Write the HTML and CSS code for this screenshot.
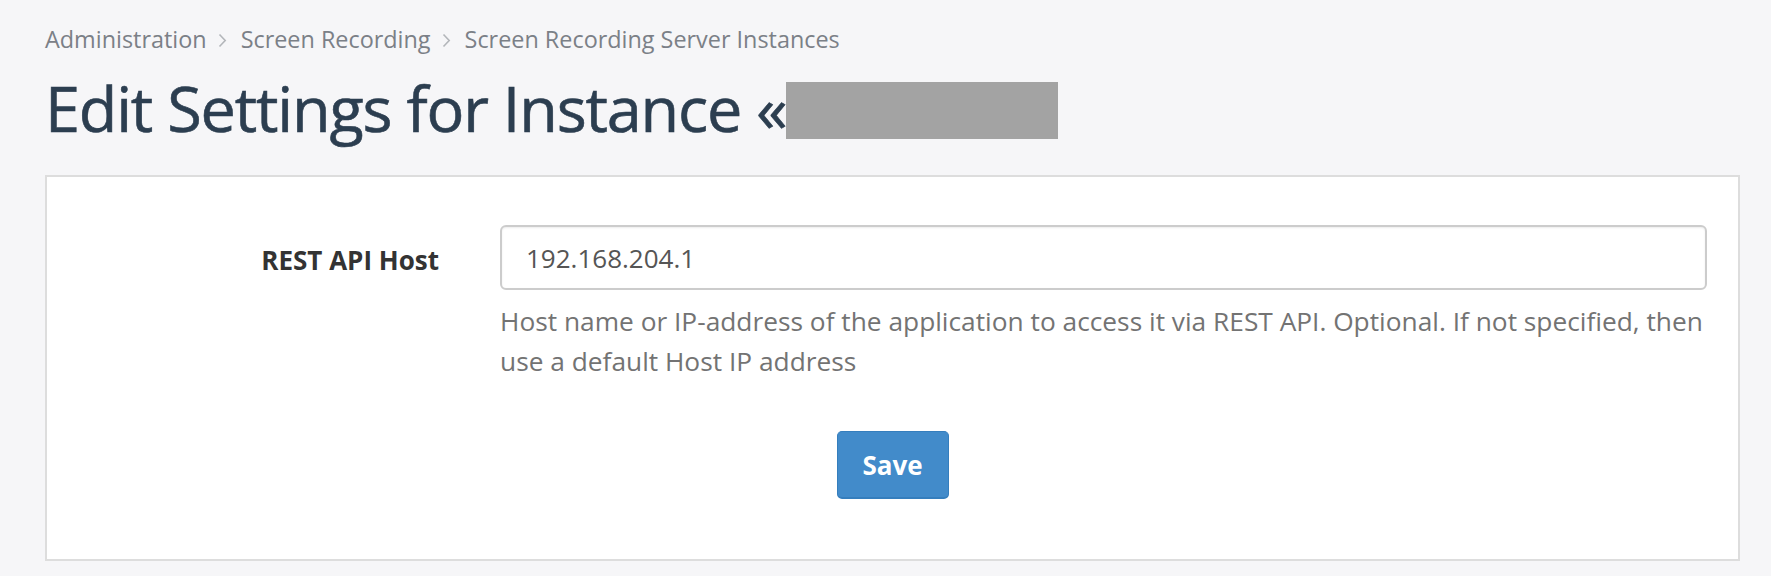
FILE: index.html
```html
<!DOCTYPE html>
<html lang="en">
<head>
    <meta charset="UTF-8">
    <title>Edit Settings for Instance</title>
    <meta name="viewport" content="width=device-width, initial-scale=1.0">
    <link rel="stylesheet" href="styles.css">
</head>
<body>
    <div class="page">
        <!-- Breadcrumbs -->
        <nav class="crumbs">
            <a href="#">Administration</a>
            <svg class="crumb-sep" width="9" height="15" viewBox="0 0 9 15"><path d="M1.5 1.5 L7.2 7.5 L1.5 13.5" fill="none" stroke="#b3b6ba" stroke-width="1.6"/></svg>
            <a href="#">Screen Recording</a>
            <svg class="crumb-sep" width="9" height="15" viewBox="0 0 9 15"><path d="M1.5 1.5 L7.2 7.5 L1.5 13.5" fill="none" stroke="#b3b6ba" stroke-width="1.6"/></svg>
            <a href="#">Screen Recording Server Instances</a>
        </nav>

        <h1 class="page-title">Edit Settings for Instance «<span class="masked"></span></h1>

        <!-- Settings form -->
        <form class="panel">
            <div class="form-row">
                <label class="form-label" for="restHost">REST API Host</label>
                <div class="form-field">
                    <input id="restHost" class="form-input" type="text" value="192.168.204.1">
                    <div class="form-help">Host name or IP-address of the application to access it via REST API. Optional. If not specified, then use a default Host IP address</div>
                </div>
            </div>
            <div class="form-actions">
                <button type="button" class="btn-save">Save</button>
            </div>
        </form>
    </div>
</body>
</html>
```

FILE: styles.css
```css
:root {
    --bg: #f6f6f8;
    --navy: #2c3e50;
    --muted: #7b8087;
    --border: #dddddd;
    --blue: #428bca;
    --blue-dark: #357ebd;
}

body {
    margin: 0;
    background: var(--bg);
    font-family: 'Open Sans', 'Liberation Sans', sans-serif;
    color: #333;
}

.page {
    padding: 23px 31px 0 45px;
}

.crumbs {
    display: flex;
    align-items: center;
    font-size: 23.4px;
    line-height: 32px;
}
.crumbs a {
    color: var(--muted);
    text-decoration: none;
}
.crumb-sep {
    margin: 3px 14px 0 11px;
}

.page-title {
    margin: 15px 0 29px 0;
    font-size: 63px;
    line-height: 76px;
    font-weight: 400;
    letter-spacing: -1.2px;
    color: var(--navy);
    -webkit-text-stroke: 0.6px var(--navy);
}
.masked {
    display: inline-block;
    width: 272px;
    height: 57px;
    background: #a3a3a3;
    vertical-align: -7px;
}

.panel {
    background: #fff;
    border: 2px solid var(--border);
    padding: 48px 31px 60px 0;
}

.form-row {
    display: flex;
    align-items: flex-start;
}
.form-label {
    width: 453px;
    flex: none;
    padding: 3px 61px 0 0;
    box-sizing: border-box;
    text-align: right;
    font-size: 26px;
    font-weight: 700;
    color: #333;
    line-height: 65px;
}
.form-field {
    flex: 1;
}
.form-input {
    display: block;
    width: 100%;
    height: 65px;
    box-sizing: border-box;
    border: 2px solid #cccccc;
    border-radius: 6px;
    padding: 0 24px;
    font-family: inherit;
    font-size: 26px;
    color: #555;
    box-shadow: inset 0 1px 2px rgba(0,0,0,0.08);
    outline: none;
}
.form-help {
    margin-top: 11px;
    font-size: 26.3px;
    line-height: 40px;
    color: #737373;
}

.form-actions {
    display: flex;
    justify-content: center;
    padding-left: 31px;
    margin-top: 50px;
}
.btn-save {
    width: 112px;
    height: 68px;
    background: var(--blue);
    border: 1px solid var(--blue-dark);
    border-bottom-width: 2px;
    border-radius: 5px;
    color: #fff;
    font-family: inherit;
    font-size: 26px;
    font-weight: 700;
    cursor: pointer;
}
```
